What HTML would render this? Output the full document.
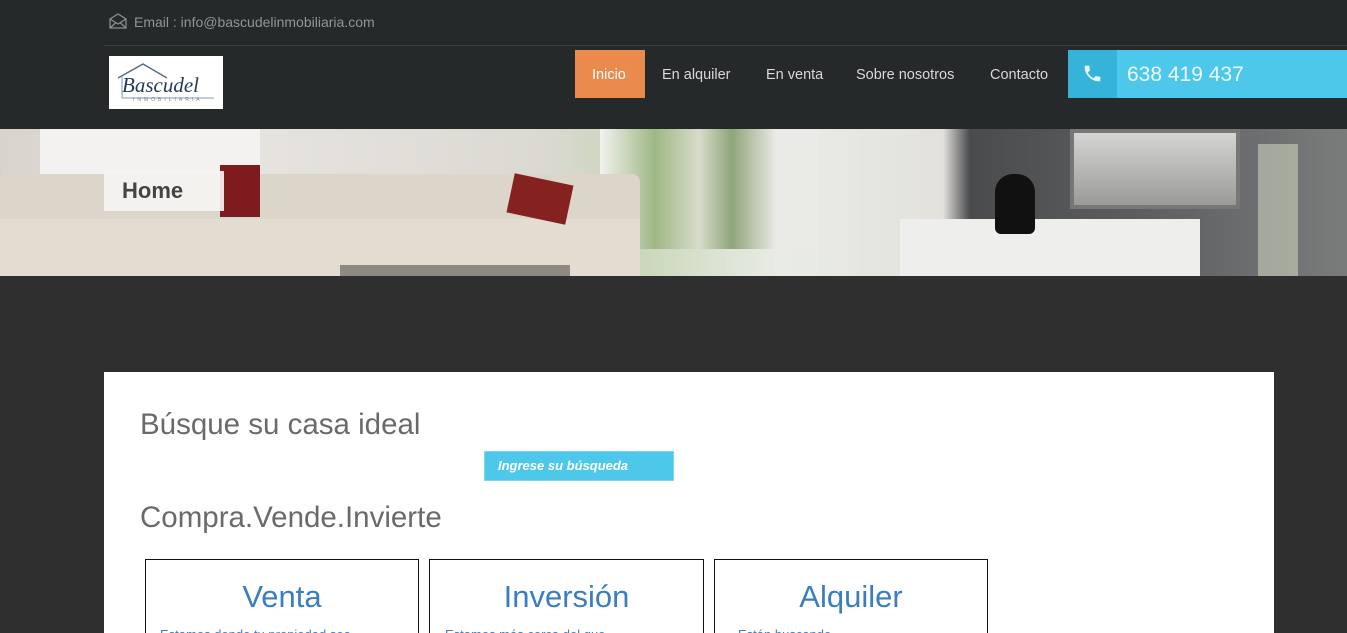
<!DOCTYPE html>
<html style="width:1347px;height:633px;overflow:hidden"><head><meta charset="utf-8"><style>
*{margin:0;padding:0;box-sizing:border-box}
body{width:1347px;height:633px;overflow:hidden;background:#2f2f2f;font-family:"Liberation Sans",sans-serif;position:relative}
.abs{position:absolute}
.hdr{left:0;top:0;width:1347px;height:129px;background:#25292a}
.nav a{position:absolute;top:51px;height:48px;line-height:48px;color:#d8d8d8;font-size:14.5px;text-decoration:none}
</style></head><body>
<div class="abs hdr"></div>
<svg class="abs" style="left:109px;top:13px" width="18" height="16" viewBox="0 0 18 16"><path d="M1 6 L9 1 L17 6 V15 H1 Z M1 6 L9 11 L17 6 M1 15 L7 9.5 M17 15 L11 9.5" fill="none" stroke="#8a8f90" stroke-width="1.3"/></svg>
<div class="abs" style="left:134px;top:14px;font-size:14px;color:#8f9596">Email : info@bascudelinmobiliaria.com</div>
<div class="abs" style="left:104px;top:45px;width:1243px;height:1px;background:#3a3f40"></div>
<div class="abs" style="left:109px;top:56px;width:114px;height:53px;background:#fff">
<svg width="114" height="53" viewBox="0 0 114 53"><path d="M9 22 L34 8 L58 22" fill="none" stroke="#5b6d80" stroke-width="1.5"/><path d="M13 20 V42 H105" fill="none" stroke="#8a97a5" stroke-width="1"/><text x="13" y="36" font-family="Liberation Serif,serif" font-style="italic" font-size="21" fill="#243a5a">Bascudel</text><text x="24" y="45" font-family="Liberation Sans" font-size="5" letter-spacing="3" fill="#7a8795">INMOBILIARIA</text></svg></div>
<div class="abs" style="left:575px;top:50px;width:70px;height:48px;background:#ea8a4d"></div>
<div class="nav">
<a style="left:592px;color:#fff">Inicio</a>
<a style="left:662px">En alquiler</a>
<a style="left:766px">En venta</a>
<a style="left:856px">Sobre nosotros</a>
<a style="left:990px">Contacto</a>
</div>
<div class="abs" style="left:1068px;top:50px;width:279px;height:48px;background:#4dc8ea"></div>
<div class="abs" style="left:1068px;top:50px;width:49px;height:48px;background:#36b3d9"></div>
<svg class="abs" style="left:1082px;top:63px" width="21" height="21" viewBox="0 0 24 24"><path d="M6.6 10.8c1.4 2.8 3.8 5.1 6.6 6.6l2.2-2.2c.3-.3.7-.4 1-.2 1.1.4 2.3.6 3.6.6.6 0 1 .4 1 1V20c0 .6-.4 1-1 1C10.6 21 3 13.4 3 4c0-.6.4-1 1-1h3.5c.6 0 1 .4 1 1 0 1.3.2 2.5.6 3.6.1.3 0 .7-.2 1z" fill="#e8f6fb"/></svg>
<div class="abs" style="left:1127px;top:63px;font-size:21px;color:#eef8fc">638 419 437</div>
<!-- hero -->
<div class="abs" style="left:0;top:129px;width:1347px;height:147px;background:linear-gradient(90deg,#d8d4cd 0%,#e6e3de 20%,#dcd9d3 40%,#c9d6b8 47%,#e9ece6 58%,#e3e1dc 70%,#4a4b4d 72%,#5d5e60 85%,#7a7b7b 100%);overflow:hidden">
<div class="abs" style="left:40px;top:0;width:220px;height:55px;background:#f3f2f0"></div>
<div class="abs" style="left:600px;top:0;width:220px;height:120px;background:linear-gradient(90deg,#f2f2ef,#9fb785 25%,#d7dccb 45%,#8fa57a 60%,#eaeae6 80%)"></div>
<div class="abs" style="left:0;top:45px;width:640px;height:102px;background:#dcd5c9;border-radius:8px 8px 0 0"></div>
<div class="abs" style="left:0;top:90px;width:640px;height:57px;background:#e3ddd1"></div>
<div class="abs" style="left:220px;top:36px;width:40px;height:52px;background:#7e1b1e"></div>
<div class="abs" style="left:510px;top:50px;width:60px;height:40px;background:#85211f;transform:rotate(12deg)"></div>
<div class="abs" style="left:340px;top:136px;width:230px;height:11px;background:#8d8a84"></div>
<div class="abs" style="left:900px;top:90px;width:300px;height:57px;background:#eeeeec"></div>
<div class="abs" style="left:995px;top:45px;width:40px;height:60px;background:#111;border-radius:18px 18px 6px 6px"></div>
<div class="abs" style="left:1070px;top:0;width:170px;height:80px;background:linear-gradient(#d5d5d3,#9a9a98);border:4px solid #777"></div>
<div class="abs" style="left:1258px;top:15px;width:40px;height:132px;background:rgba(220,225,200,.5)"></div>
</div>
<div class="abs" style="left:104px;top:171px;width:120px;height:40px;background:rgba(245,244,242,.92)"></div>
<div class="abs" style="left:122px;top:178px;font-size:22px;font-weight:bold;color:#444">Home</div>
<!-- content -->
<div class="abs" style="left:104px;top:372px;width:1170px;height:261px;background:#fff;overflow:hidden">
<div class="abs" style="left:36px;top:36px;font-size:29.5px;color:#6a6a6a">Búsque su casa ideal</div>
<div class="abs" style="left:380px;top:79px;width:190px;height:30px;background:#4dc8ea;border:1px solid #7dd6ef"></div>
<div class="abs" style="left:394px;top:86px;font-size:13px;font-weight:bold;font-style:italic;color:#fff">Ingrese su búsqueda</div>
<div class="abs" style="left:36px;top:129px;font-size:29.5px;color:#6a6a6a">Compra.Vende.Invierte</div>
<div class="abs" style="left:41px;top:187px;width:274px;height:90px;border:1px solid #111"></div>
<div class="abs" style="left:325px;top:187px;width:275px;height:90px;border:1px solid #111"></div>
<div class="abs" style="left:610px;top:187px;width:274px;height:90px;border:1px solid #111"></div>
<div class="abs" style="left:41px;top:207px;width:274px;text-align:center;font-size:31px;color:#3a7ec0">Venta</div>
<div class="abs" style="left:325px;top:207px;width:275px;text-align:center;font-size:31px;color:#3a7ec0">Inversión</div>
<div class="abs" style="left:610px;top:207px;width:274px;text-align:center;font-size:31px;color:#3a7ec0">Alquiler</div>
<div class="abs" style="left:56px;top:255px;font-size:13px;color:#3a7ec0">Estamos donde tu propiedad sea</div>
<div class="abs" style="left:341px;top:255px;font-size:13px;color:#3a7ec0">Estamos más cerca del que</div>
<div class="abs" style="left:634px;top:255px;font-size:13px;color:#3a7ec0">Están buscando</div>
</div>
</body></html>
